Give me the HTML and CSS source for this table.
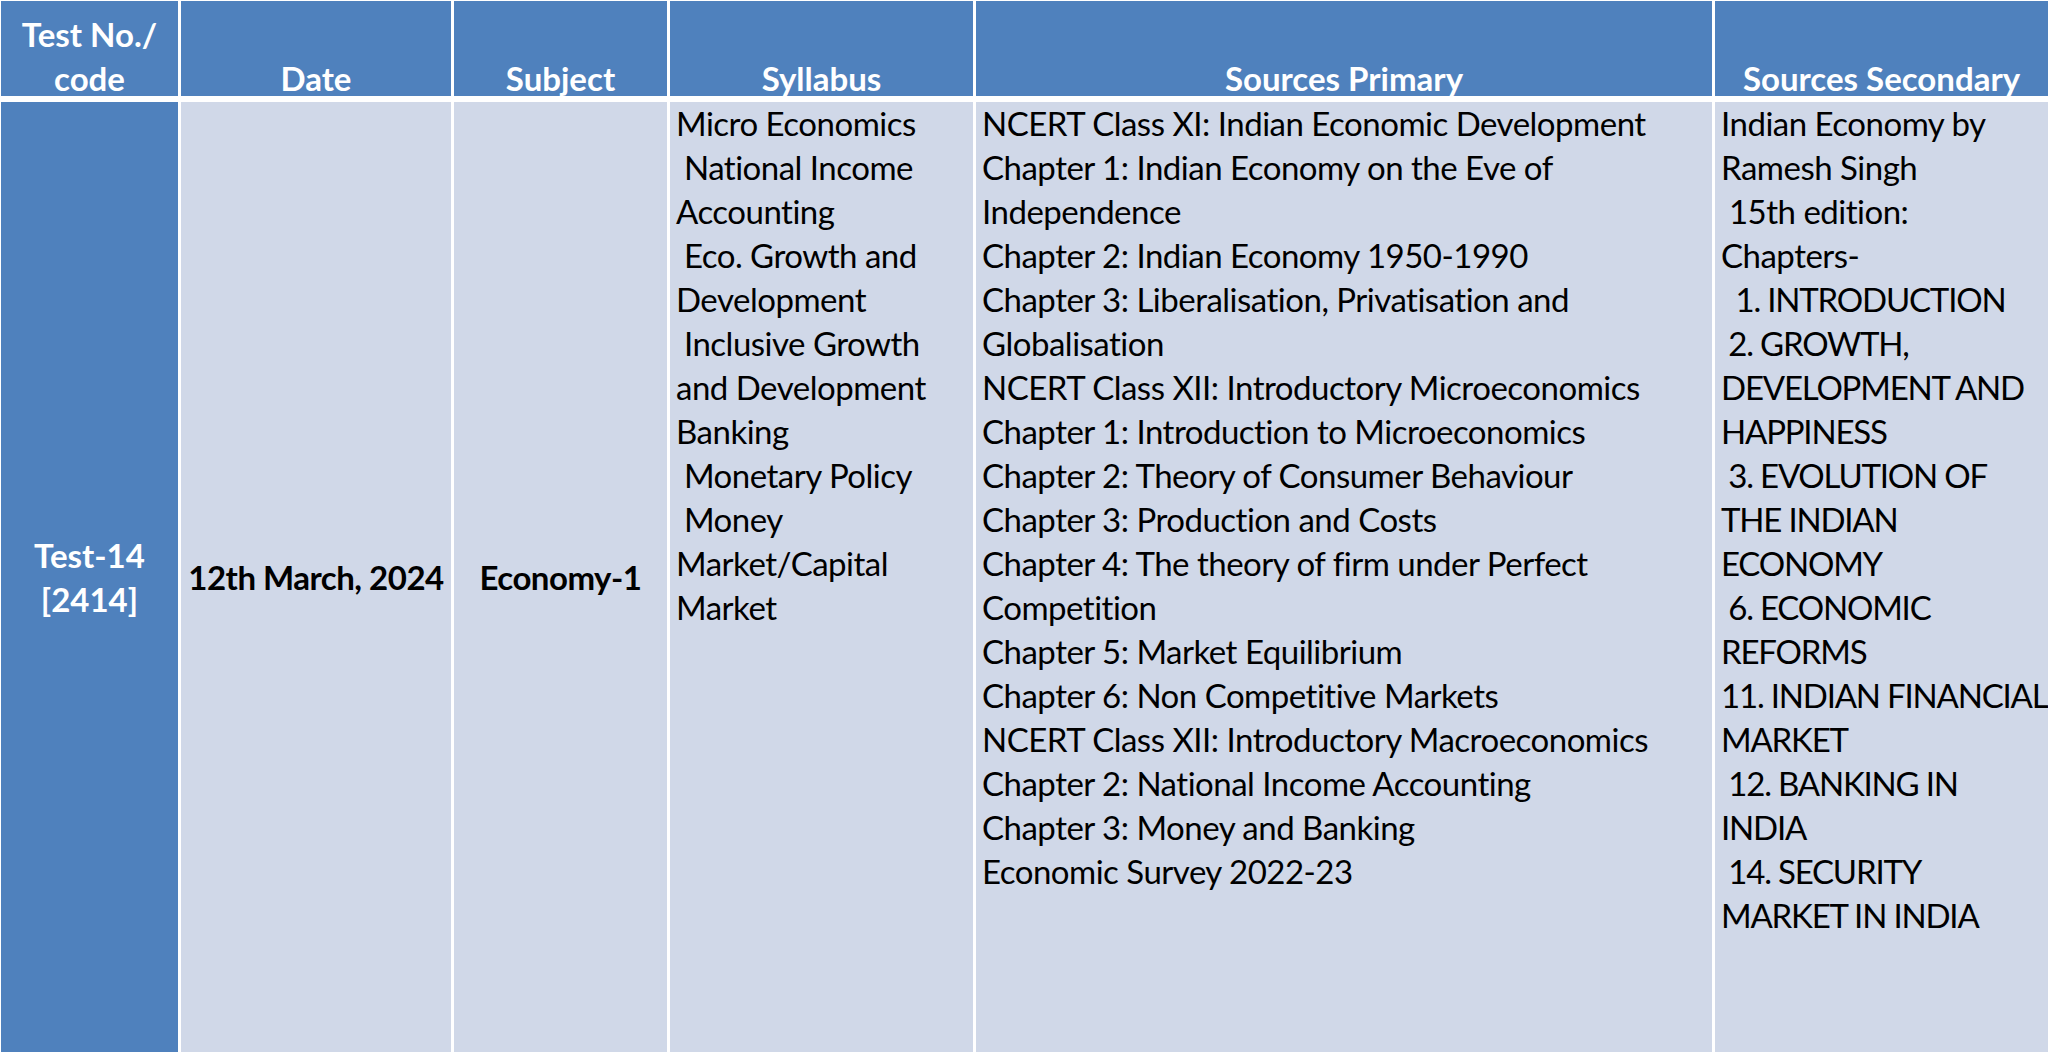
FILE: index.html
```html
<!DOCTYPE html>
<html lang="en">
<head>
<meta charset="utf-8">
<title>Test Schedule</title>
<link rel="stylesheet" href="styles.css">
</head>
<body>
<div class="table">
  <div class="th"><div class="th-in"><div>Test No./</div><div>code</div></div></div>
  <div class="th"><div class="th-in"><div>Date</div></div></div>
  <div class="th"><div class="th-in"><div>Subject</div></div></div>
  <div class="th"><div class="th-in"><div>Syllabus</div></div></div>
  <div class="th"><div class="th-in"><div>Sources Primary</div></div></div>
  <div class="th"><div class="th-in"><div>Sources Secondary</div></div></div>

  <div class="td td-code"><div>Test-14</div><div>[2414]</div></div>
  <div class="td td-center"><div>12th March, 2024</div></div>
  <div class="td td-center"><div>Economy-1</div></div>
  <div class="td td-list">
    <div class="lines">
<div>Micro Economics</div><div> National Income</div><div>Accounting</div><div> Eco. Growth and</div><div>Development</div><div> Inclusive Growth</div><div>and Development</div><div>Banking</div><div> Monetary Policy</div><div> Money</div><div>Market/Capital</div><div>Market</div>
    </div>
  </div>
  <div class="td td-list">
    <div class="lines">
<div>NCERT Class XI: Indian Economic Development</div><div>Chapter 1: Indian Economy on the Eve of</div><div>Independence</div><div>Chapter 2: Indian Economy 1950-1990</div><div>Chapter 3: Liberalisation, Privatisation and</div><div>Globalisation</div><div>NCERT Class XII: Introductory Microeconomics</div><div>Chapter 1: Introduction to Microeconomics</div><div>Chapter 2: Theory of Consumer Behaviour</div><div>Chapter 3: Production and Costs</div><div>Chapter 4: The theory of firm under Perfect</div><div>Competition</div><div>Chapter 5: Market Equilibrium</div><div>Chapter 6: Non Competitive Markets</div><div>NCERT Class XII: Introductory Macroeconomics</div><div>Chapter 2: National Income Accounting</div><div>Chapter 3: Money and Banking</div><div>Economic Survey 2022-23</div>
    </div>
  </div>
  <div class="td td-list">
    <div class="lines">
<div>Indian Economy by</div><div>Ramesh Singh</div><div> 15th edition:</div><div>Chapters-</div><div class="caps">  1. INTRODUCTION</div><div class="caps"> 2. GROWTH,</div><div class="caps">DEVELOPMENT AND</div><div class="caps">HAPPINESS</div><div class="caps"> 3. EVOLUTION OF</div><div class="caps">THE INDIAN</div><div class="caps">ECONOMY</div><div class="caps"> 6. ECONOMIC</div><div class="caps">REFORMS</div><div class="caps">11. INDIAN FINANCIAL</div><div class="caps">MARKET</div><div class="caps"> 12. BANKING IN</div><div class="caps">INDIA</div><div class="caps"> 14. SECURITY</div><div class="caps">MARKET IN INDIA</div>
    </div>
  </div>
</div>
</body>
</html>
```

FILE: styles.css
```css
* {
  box-sizing: border-box;
}

html, body {
  margin: 0;
  padding: 0;
  background: #ffffff;
}

body {
  font-family: Lato, "Liberation Sans", sans-serif;
  font-size: 33px;
  line-height: 44px;
  letter-spacing: -0.5px;
  color: #000000;
}

.table {
  display: grid;
  grid-template-columns: 177px 270px 213px 303px 736px 1fr;
  grid-template-rows: 95px 1fr;
  column-gap: 3px;
  row-gap: 6px;
  padding: 1px 0 2px 1px;
  width: 2048px;
  height: 1054px;
  overflow: hidden;
}

.th {
  background: #4f81bd;
  color: #ffffff;
  font-weight: 700;
  letter-spacing: 0;
  display: flex;
  flex-direction: column;
  justify-content: flex-end;
  align-items: center;
  text-align: center;
  white-space: nowrap;
}

.th-in {
  margin-bottom: -4px;
}

.td {
  background: #d0d8e8;
  overflow: hidden;
}

.td-code {
  background: #4f81bd;
  color: #ffffff;
  font-weight: 700;
  letter-spacing: 0;
  display: flex;
  flex-direction: column;
  justify-content: center;
  align-items: center;
  text-align: center;
}

.td-center {
  font-weight: 700;
  display: flex;
  justify-content: center;
  align-items: center;
  text-align: center;
  white-space: nowrap;
}

.td-list {
  padding: 0 2px 0 6px;
}

.lines {
  margin-top: -1px;
}

.lines > div {
  white-space: pre;
}

.lines > .caps {
  letter-spacing: -1.2px;
}
```
